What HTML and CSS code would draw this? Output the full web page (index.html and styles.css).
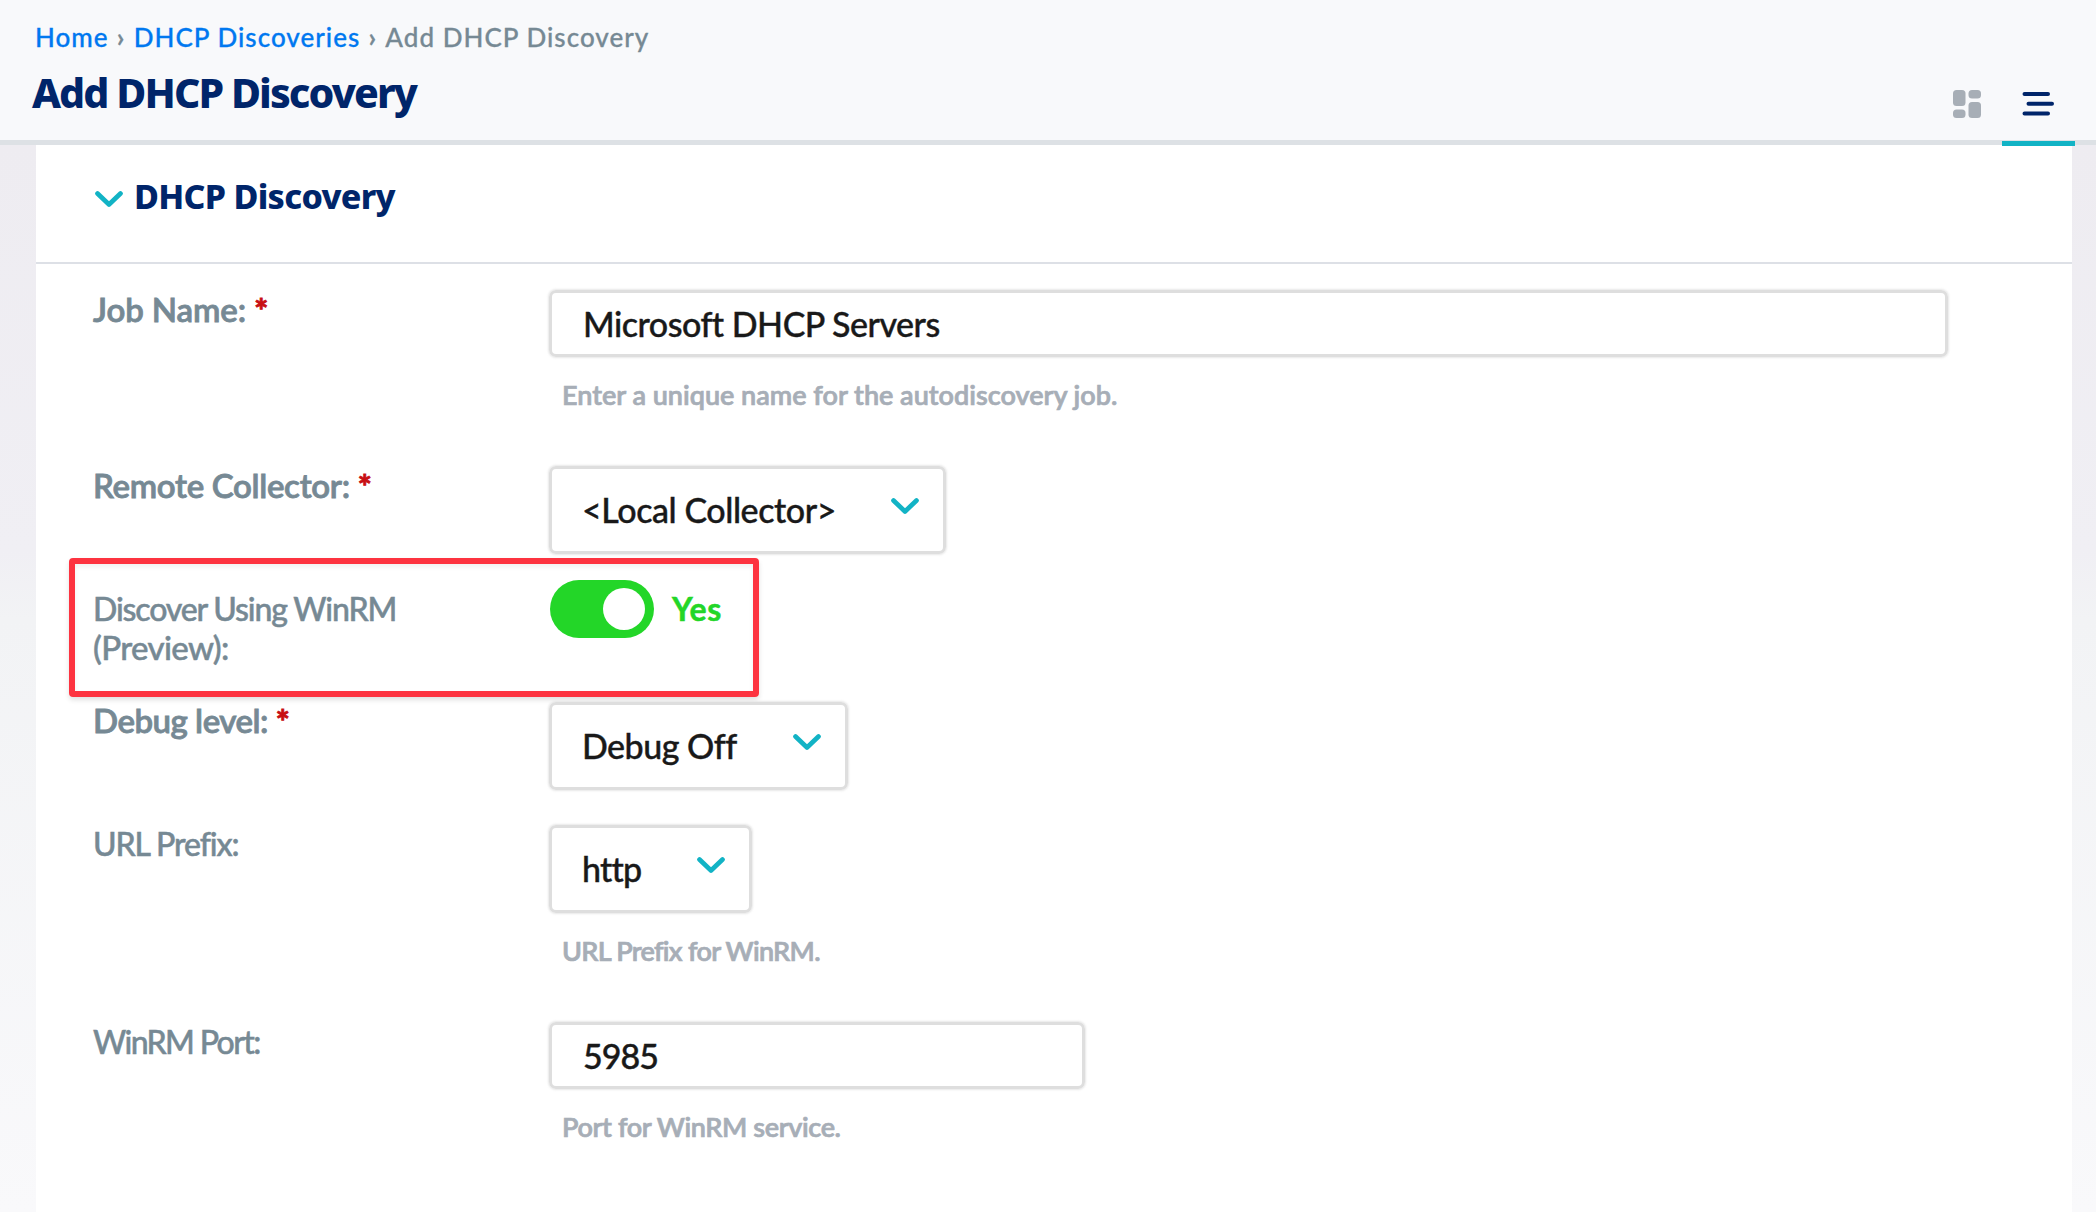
FILE: index.html
```html
<!DOCTYPE html>
<html lang="en">
<head>
<meta charset="utf-8">
<title>Add DHCP Discovery</title>
<link rel="stylesheet" href="styles.css">
</head>
<body>
<header class="header">
  <div class="heading">
    <nav class="crumbs"><a href="#">Home</a><span class="sep">›</span><a href="#">DHCP Discoveries</a><span class="sep">›</span><span>Add DHCP Discovery</span></nav>
    <h1 class="title">Add DHCP Discovery</h1>
  </div>
  <div class="views">
    <button class="view" aria-label="Grid view"><svg width="28" height="28" viewBox="0 0 28 28" fill="#a7aeb6"><rect width="12.5" height="16" rx="3.5"/><rect x="15.5" width="12.5" height="8.5" rx="3.5"/><rect y="19.5" width="12.5" height="8.5" rx="3.5"/><rect x="15.5" y="12" width="12.5" height="16" rx="3.5"/></svg></button>
    <button class="view view-active" aria-label="List view"><svg width="32" height="26" viewBox="0 0 32 26" stroke="#00256a" stroke-width="4" stroke-linecap="round"><path d="M2.500 3H26M6.500 12.700H30M2.500 22.500H26"/></svg></button>
  </div>
</header>
<main class="card">
  <h2 class="section"><svg class="chevron" width="28" height="17" viewBox="0 0 28 17"><path d="M2.500 2.500 14 13.500 25.500 2.500"/></svg>DHCP Discovery</h2>
  <form class="form">
    <div class="row row-name">
      <label class="label required"><span>Job Name:</span> <b class="star">*</b></label>
      <div class="field"><div class="input input-wide">Microsoft DHCP Servers</div><p class="help">Enter a unique name for the autodiscovery job.</p></div>
    </div>
    <div class="row row-collector">
      <label class="label required"><span>Remote Collector:</span> <b class="star">*</b></label>
      <div class="field"><div class="select select-collector"><span>&lt;Local Collector&gt;</span><svg class="chevron" width="28" height="17" viewBox="0 0 28 17"><path d="M2.500 2.500 14 13.500 25.500 2.500"/></svg></div></div>
    </div>
    <div class="row row-winrm">
      <label class="label"><span class="name-line">Discover Using WinRM</span><br><span class="preview-line">(Preview):</span></label>
      <div class="field toggle-field"><span class="toggle"><i class="knob"></i></span><b class="state">Yes</b></div>
      <div class="highlight"></div>
    </div>
    <div class="row row-debug">
      <label class="label required"><span>Debug level:</span> <b class="star">*</b></label>
      <div class="field"><div class="select select-debug"><span>Debug Off</span><svg class="chevron" width="28" height="17" viewBox="0 0 28 17"><path d="M2.500 2.500 14 13.500 25.500 2.500"/></svg></div></div>
    </div>
    <div class="row row-prefix">
      <label class="label">URL Prefix:</label>
      <div class="field"><div class="select select-prefix"><span>http</span><svg class="chevron" width="28" height="17" viewBox="0 0 28 17"><path d="M2.500 2.500 14 13.500 25.500 2.500"/></svg></div><p class="help">URL Prefix for WinRM.</p></div>
    </div>
    <div class="row row-port">
      <label class="label">WinRM Port:</label>
      <div class="field"><div class="input input-port">5985</div><p class="help">Port for WinRM service.</p></div>
    </div>
  </form>
</main>
</body>
</html>
```
FILE: styles.css
```css
* { box-sizing: border-box; }
html, body { height: 100%; }
body {
  margin: 0;
  display: flex;
  flex-direction: column;
  overflow: hidden;
  font-family: Lato, "Liberation Sans", sans-serif;
  background: linear-gradient(#eeecf1 145px, #f0eff4 550px, #f2f3f5 620px, #f9f9fb 1212px);
}
.header {
  position: relative;
  height: 145px;
  flex: none;
  display: flex;
  justify-content: space-between;
  padding: 0 21px 0 32px;
  background: #f8f9fb;
  border-bottom: 5px solid #dde1e5;
}
.heading { padding-top: 17px; }
.crumbs {
  display: flex;
  align-items: center;
  height: 40px;
  padding-left: 3px;
  font-size: 26px;
  font-weight: 500;
  letter-spacing: 1.03px;
  color: #768994;
  -webkit-text-stroke: .3px currentColor;
}
.crumbs a { color: #0078f0; text-decoration: none; }
.sep { width: 25px; text-align: center; font-weight: 700; }
.title {
  margin: 7px 0 0;
  font: 800 41px/56px "Noto Sans", sans-serif;
  letter-spacing: -1.91px;
  color: #00256a;
}
.views { display: flex; padding-top: 61px; }
.view {
  width: 73px;
  height: 85px;
  padding: 0;
  border: 0;
  border-bottom: 5px solid transparent;
  background: none;
  display: flex;
  align-items: center;
  justify-content: center;
}
.view:first-child { padding: 6px 0 0 3px; }
.view-active { padding: 6px 2px 0 0; border-color: #12b3c5; }
.card {
  flex: 1;
  margin: 0 24px 0 36px;
  background: #fff;
}
.section {
  display: flex;
  align-items: center;
  gap: 11px;
  height: 119px;
  margin: 0;
  padding: 0 0 15px 59px;
  border-bottom: 2px solid #dde0e6;
  font: 800 34px/48px "Noto Sans", sans-serif;
  letter-spacing: -.7px;
  color: #00256a;
}
.section .chevron { margin-top: 7px; }
.chevron { fill: none; stroke: #12b3c5; stroke-width: 4.7; stroke-linecap: round; stroke-linejoin: round; flex: none; }
.form { padding: 26px 0 0 57px; }
.row { position: relative; display: grid; grid-template-columns: 456px 1fr; align-items: start; }
.row-name { height: 176px; }
.row-collector { height: 114px; }
.row-winrm { height: 122px; }
.row-debug { height: 123px; }
.row-prefix { height: 197px; }
.label {
  font-size: 33px;
  line-height: 39px;
  font-weight: 500;
  color: #768994;
  -webkit-text-stroke: .5px currentColor;
}
.required { font-weight: 600; -webkit-text-stroke-width: .8px; }
.row-name .label { letter-spacing: -.1px; }
.row-collector .label { letter-spacing: -.32px; }
.row-winrm .label { padding-top: 9px; }
.name-line { font-size: 32px; letter-spacing: -1.15px; }
.preview-line { letter-spacing: -.65px; }
.row-debug .label { margin-top: -1px; letter-spacing: -.49px; }
.row-prefix .label { margin-top: -1px; font-size: 32px; letter-spacing: -1.1px; }
.row-port .label { font-size: 32px; letter-spacing: -1.65px; }
.star { color: #c80f14; font-weight: 900; letter-spacing: 0; }
.input, .select {
  display: flex;
  align-items: center;
  border: 3px solid #dedede;
  border-radius: 7px;
  box-shadow: 0 0 2px 1px rgba(222, 222, 222, .7);
  padding: 0 0 1px 31px;
  font-size: 34px;
  font-weight: 500;
  letter-spacing: -.5px;
  color: #191919;
  -webkit-text-stroke: .4px currentColor;
}
.input { height: 67px; }
.input-wide { width: 1399px; }
.input-port { width: 536px; letter-spacing: -.97px; }
.select { height: 88px; justify-content: space-between; padding: 0 24px 1px 30px; }
.select .chevron { margin-bottom: 7px; }
.select-collector { width: 397px; letter-spacing: -.43px; }
.select-debug { width: 299px; }
.select-prefix { width: 203px; letter-spacing: -.8px; }
.help {
  margin: 19px 0 0 13px;
  font-size: 27px;
  line-height: 38px;
  font-weight: 600;
  color: #a7aeb7;
  -webkit-text-stroke: .7px currentColor;
}
.row-prefix .help { letter-spacing: -.7px; }
.row-port .help { letter-spacing: -.38px; }
.toggle-field { display: flex; align-items: center; gap: 18px; padding-left: 1px; }
.toggle { width: 104px; height: 58px; border-radius: 29px; background: #23d628; display: flex; align-items: center; justify-content: flex-end; padding-right: 9px; }
.knob { width: 42px; height: 42px; border-radius: 50%; background: #fff; }
.state { margin-top: -2px; font-size: 32px; font-weight: 700; letter-spacing: .5px; color: #23d628; -webkit-text-stroke: .5px currentColor; }
.highlight {
  position: absolute;
  left: -24px;
  top: -22px;
  width: 690px;
  height: 139px;
  border: 6px solid #fd3340;
  border-radius: 4px;
  box-shadow: 0 3px 5px rgba(0, 0, 0, .12), inset 0 3px 5px rgba(0, 0, 0, .06);
}
```
